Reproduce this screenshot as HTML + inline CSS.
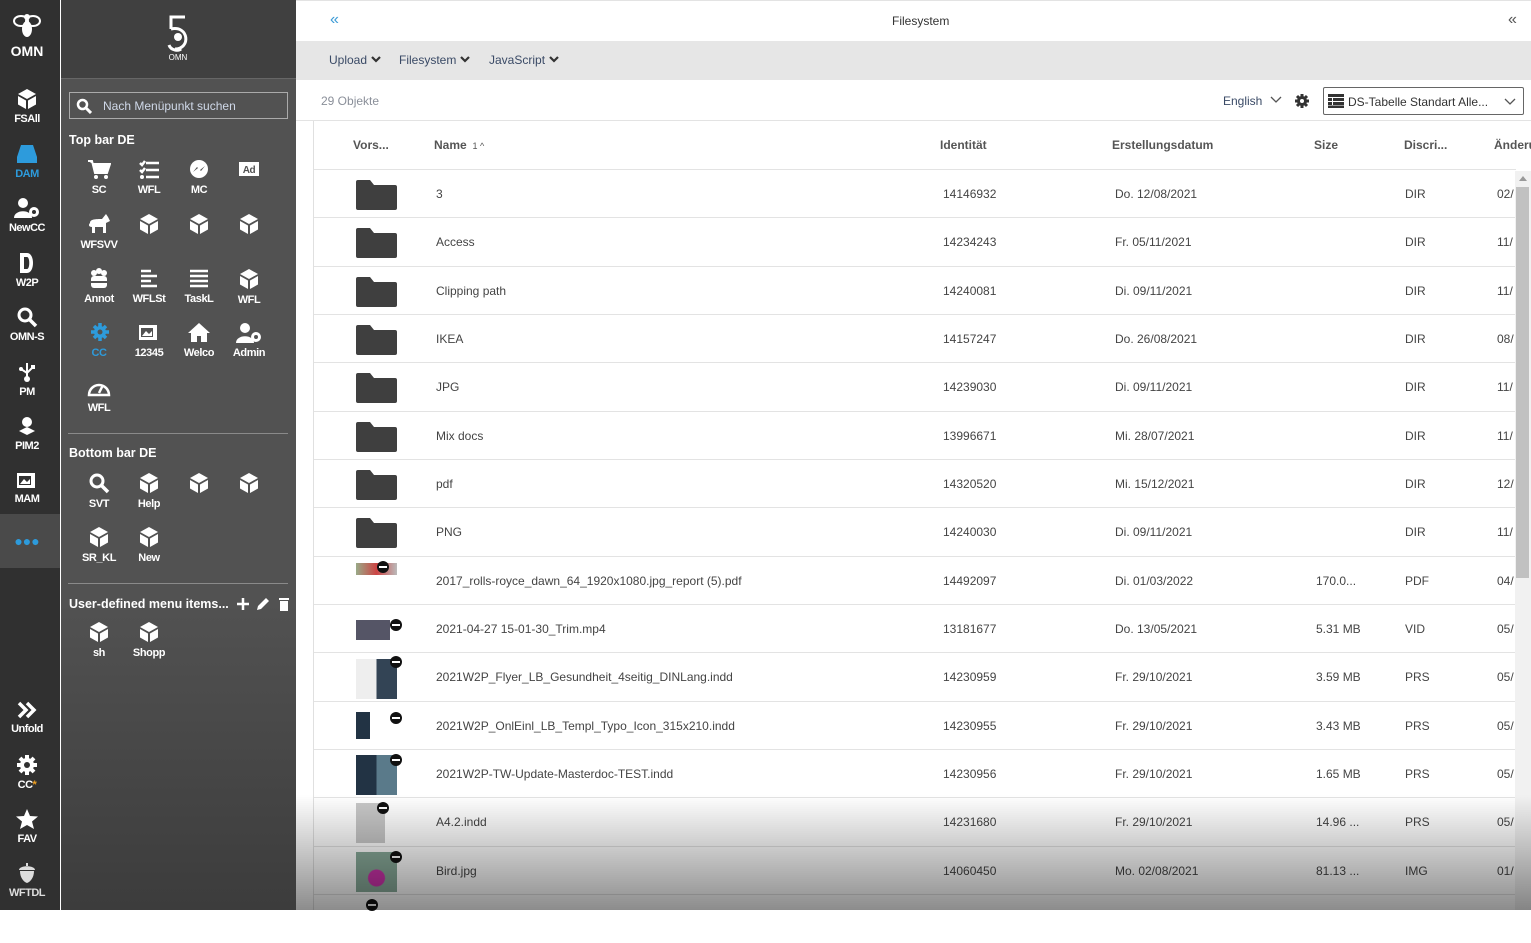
<!DOCTYPE html>
<html><head><meta charset="utf-8">
<style>
*{box-sizing:border-box;margin:0;padding:0}
body{width:1531px;height:910px;overflow:hidden;position:relative;font-family:"Liberation Sans",Arial,sans-serif;background:#fff}
.rail{position:absolute;left:0;top:0;width:60px;height:910px;background:#303030}
.rail .sel{position:absolute;left:0;top:514px;width:60px;height:54px;background:#4a4a4a}
.ri{position:absolute;left:0;width:54px;text-align:center;color:#fff;font-size:11px;font-weight:bold;letter-spacing:-0.5px}
.ri svg{display:block;margin:0 auto 3px}
.panel{position:absolute;left:61px;top:0;width:235px;height:910px;background:linear-gradient(#525252 0,#525252 600px,#3c3c3c 910px)}
.logo{position:absolute;left:0;top:0;width:235px;height:79px;background:#404040;border-bottom:1px solid #666}
.search{position:absolute;left:8px;top:92px;width:219px;height:27px;border:1px solid #aaa;color:#cfd8e8;font-size:12px;padding:6px 0 0 33px}
.h{position:absolute;left:8px;color:#fff;font-size:12.5px;font-weight:bold}
.it{position:absolute;width:50px;text-align:center;color:#fff;font-size:11px;font-weight:bold;letter-spacing:-0.4px}
.it svg{display:block;margin:0 auto 4px}
.hr{position:absolute;left:7px;width:220px;height:1px;background:#8a8a8a}
.main{position:absolute;left:296px;top:0;width:1235px;height:910px}
.top{position:absolute;left:0;top:0;width:1235px;height:41px;background:#fff;border-top:1px solid #e3e3e3}
.tool{position:absolute;left:0;top:41px;width:1235px;height:39px;background:#e6e6e6}
.tool span{position:absolute;top:12px;font-size:12px;color:#3a4a66}
.tool svg{margin-left:4px;vertical-align:1px}
.cnt{position:absolute;left:0;top:80px;width:1235px;height:41px;border-bottom:1px solid #e3e3e3;background:#fff}
.tbl{position:absolute;left:17px;top:121px;width:1218px;height:789px;border-left:1px solid #e0e0e0}
.th{position:absolute;top:17px;font-size:12px;font-weight:bold;color:#555}
.row{position:absolute;left:0;width:1202px;height:49px;border-top:1px solid #e3e3e3;font-size:12px;color:#444}
.row span{position:absolute;top:17px;white-space:nowrap}
.fold{position:absolute;left:42px;top:10px;width:41px;height:30px}
.sb{position:absolute;left:1219px;top:171px;width:16px;height:739px;background:#f1f1f1}
.sb i{position:absolute;left:1px;top:16px;width:13px;height:391px;background:#c1c1c1}
.shade{position:absolute;left:296px;top:795px;width:1235px;height:115px;background:linear-gradient(rgba(0,0,0,0),rgba(0,0,0,0.45));pointer-events:none}
.mi{position:absolute;left:42px;width:41px}
.dot{position:absolute;width:12px;height:12px;border-radius:6px;background:#111}
.dot:after{content:"";position:absolute;left:2px;top:5px;width:8px;height:2px;background:#fff}
</style></head><body>

<div class="rail">
  <div class="ri" style="top:12px"><svg width="30" height="28" viewBox="0 0 30 28"><ellipse cx="9" cy="9" rx="7" ry="5" fill="none" stroke="#fff" stroke-width="2"/><ellipse cx="21" cy="9" rx="7" ry="5" fill="none" stroke="#fff" stroke-width="2"/><ellipse cx="15" cy="17" rx="5" ry="8" fill="#fff"/><circle cx="15" cy="5" r="3" fill="#fff"/></svg><span style="font-size:14px;letter-spacing:0">OMN</span></div>
  <div class="ri" style="top:88px"><svg width="22" height="22" viewBox="0 0 22 22"><path d="M11 1 L20 6 L11 11 L2 6Z M2 8 L10 12.5 L10 21 L2 16.5Z M12 12.5 L20 8 L20 16.5 L12 21Z" fill="#fff"/></svg>FSAll</div>
  <div class="ri" style="top:143px;color:#2d9bdc"><svg width="22" height="22" viewBox="0 0 22 22"><path d="M5 2 H17 L21 14 V20 H1 V14Z" fill="#2d9bdc"/></svg>DAM</div>
  <div class="ri" style="top:197px"><svg width="28" height="22" viewBox="0 0 28 22"><circle cx="10" cy="6" r="5" fill="#fff"/><path d="M1 21 C1 12 19 12 19 21Z" fill="#fff"/><circle cx="21" cy="15" r="5" fill="#fff"/><circle cx="21" cy="15" r="2" fill="#303030"/></svg>NewCC</div>
  <div class="ri" style="top:252px"><svg width="20" height="22" viewBox="0 0 20 22"><path d="M3 1 H10 C18 1 18 21 10 21 H3Z" fill="#fff"/><path d="M7 5 H10 C13 5 13 17 10 17 H7Z" fill="#303030"/></svg>W2P</div>
  <div class="ri" style="top:306px"><svg width="22" height="22" viewBox="0 0 22 22"><circle cx="9" cy="9" r="6" fill="none" stroke="#fff" stroke-width="3"/><path d="M13 13 L20 20" stroke="#fff" stroke-width="3.5"/></svg>OMN-S</div>
  <div class="ri" style="top:361px"><svg width="22" height="22" viewBox="0 0 22 22"><path d="M11 2 V16 M5 8 L11 12 L17 6" stroke="#fff" stroke-width="2" fill="none"/><circle cx="11" cy="18" r="3" fill="#fff"/><circle cx="5" cy="8" r="2" fill="#fff"/><rect x="15" y="4" width="4" height="4" fill="#fff"/></svg>PM</div>
  <div class="ri" style="top:415px"><svg width="22" height="22" viewBox="0 0 22 22"><circle cx="11" cy="7" r="5" fill="#fff"/><path d="M3 16 L11 12 L19 16 L11 20Z" fill="#fff"/></svg>PIM2</div>
  <div class="ri" style="top:470px"><svg width="22" height="20" viewBox="0 0 22 20"><rect x="1" y="3" width="18" height="15" fill="#fff"/><rect x="3" y="6" width="12" height="9" fill="#303030"/><path d="M4 14 L8 9 L11 12 L14 9 V14Z" fill="#fff"/></svg>MAM</div>
  <div class="sel"></div>
  <div class="ri" style="top:533px;color:#2d9bdc;font-size:14px;letter-spacing:0">●●●</div>
  <div class="ri" style="top:700px"><svg width="22" height="20" viewBox="0 0 22 20"><path d="M3 3 L10 10 L3 17 M11 3 L18 10 L11 17" stroke="#fff" stroke-width="3.5" fill="none"/></svg>Unfold</div>
  <div class="ri" style="top:754px"><svg width="22" height="22" viewBox="0 0 22 22"><circle cx="11" cy="11" r="7" fill="#fff"/><g stroke="#fff" stroke-width="4"><path d="M11 1V21M1 11H21M4 4L18 18M18 4L4 18"/></g><circle cx="11" cy="11" r="3" fill="#303030"/></svg>CC<span style="color:#f0a020">*</span></div>
  <div class="ri" style="top:808px"><svg width="24" height="22" viewBox="0 0 24 22"><path d="M12 1 L15 8 L23 8.5 L17 13.5 L19 21 L12 17 L5 21 L7 13.5 L1 8.5 L9 8Z" fill="#fff"/></svg>FAV</div>
  <div class="ri" style="top:862px;color:#ddd"><svg width="22" height="22" viewBox="0 0 22 22"><path d="M3 8 C3 3 19 3 19 8Z M4 9 H18 C18 16 14 20 11 21 C8 20 4 16 4 9Z" fill="#ddd"/><rect x="10" y="1" width="2" height="3" fill="#ddd"/></svg>WFTDL</div>
</div>

<div class="panel">
  <div class="logo"><svg style="position:absolute;left:104px;top:15px" width="26" height="48" viewBox="0 0 26 48"><path d="M20 2 H6 V14 M6 14 C24 10 26 34 10 34 M4 30 C6 36 14 36 16 34" stroke="#fff" stroke-width="3" fill="none"/><circle cx="13" cy="22" r="4" fill="#fff"/><text x="13" y="45" fill="#fff" font-size="8" text-anchor="middle" font-family="Liberation Sans">OMN</text></svg></div>
  <div class="search"><svg style="position:absolute;left:6px;top:5px" width="16" height="16" viewBox="0 0 16 16"><circle cx="6.5" cy="6.5" r="4.5" fill="none" stroke="#fff" stroke-width="2.5"/><path d="M10 10 L15 15" stroke="#fff" stroke-width="3"/></svg>Nach Menüpunkt suchen</div>
  <div class="h" style="top:133px">Top bar DE</div>
  <div class="it" style="left:13px;top:159px"><svg width="24" height="21" viewBox="0 0 24 21"><path d="M1 2 H5 L8 14 H20 L23 5 H6" fill="#fff" stroke="#fff" stroke-width="2"/><circle cx="9" cy="18" r="2" fill="#fff"/><circle cx="19" cy="18" r="2" fill="#fff"/></svg>SC</div>
  <div class="it" style="left:63px;top:159px"><svg width="22" height="21" viewBox="0 0 22 21"><path d="M2 4 L4 6 L7 2 M2 11 L4 13 L7 9 M8 4H21 M8 11H21 M8 18H21" stroke="#fff" stroke-width="2.5" fill="none"/><circle cx="4" cy="18" r="2" fill="#fff"/></svg>WFL</div>
  <div class="it" style="left:113px;top:159px"><svg width="22" height="21" viewBox="0 0 22 21"><circle cx="11" cy="10" r="9" fill="#fff"/><path d="M5 13 L9 8 L12 11 L17 7 L13 12 L10 9Z" fill="#525252"/></svg>MC</div>
  <div class="it" style="left:163px;top:159px"><svg width="22" height="21" viewBox="0 0 22 21"><rect x="1" y="3" width="20" height="14" fill="#fff"/><text x="11" y="14" font-size="10" font-weight="bold" fill="#525252" text-anchor="middle" font-family="Liberation Sans">Ad</text></svg></div>
  <div class="it" style="left:13px;top:213px"><svg width="26" height="22" viewBox="0 0 26 22"><path d="M4 10 C4 6 10 6 16 6 L20 1 L22 4 L24 8 L20 10 V20 H17 V14 H9 V20 H6 V14 C3 14 2 12 4 10Z" fill="#fff"/></svg>WFSVV</div>
  <div class="it" style="left:63px;top:213px"><svg width="22" height="22" viewBox="0 0 22 22"><path d="M11 1 L20 6 L11 11 L2 6Z M2 8 L10 12.5 L10 21 L2 16.5Z M12 12.5 L20 8 L20 16.5 L12 21Z" fill="#fff"/></svg></div>
  <div class="it" style="left:113px;top:213px"><svg width="22" height="22" viewBox="0 0 22 22"><path d="M11 1 L20 6 L11 11 L2 6Z M2 8 L10 12.5 L10 21 L2 16.5Z M12 12.5 L20 8 L20 16.5 L12 21Z" fill="#fff"/></svg></div>
  <div class="it" style="left:163px;top:213px"><svg width="22" height="22" viewBox="0 0 22 22"><path d="M11 1 L20 6 L11 11 L2 6Z M2 8 L10 12.5 L10 21 L2 16.5Z M12 12.5 L20 8 L20 16.5 L12 21Z" fill="#fff"/></svg></div>
  <div class="it" style="left:13px;top:268px"><svg width="22" height="21" viewBox="0 0 22 21"><circle cx="6" cy="5" r="3" fill="#fff"/><circle cx="11" cy="3" r="3" fill="#fff"/><circle cx="16" cy="5" r="3" fill="#fff"/><rect x="3" y="8" width="16" height="12" rx="3" fill="#fff"/><rect x="3" y="13" width="16" height="2" fill="#525252"/></svg>Annot</div>
  <div class="it" style="left:63px;top:268px"><svg width="22" height="21" viewBox="0 0 22 21"><path d="M3 3H13 M3 8H19 M3 13H13 M3 18H19" stroke="#fff" stroke-width="2.5"/></svg>WFLSt</div>
  <div class="it" style="left:113px;top:268px"><svg width="22" height="21" viewBox="0 0 22 21"><path d="M2 3H20 M2 8H20 M2 13H20 M2 18H20" stroke="#fff" stroke-width="2.5"/></svg>TaskL</div>
  <div class="it" style="left:163px;top:268px"><svg width="22" height="22" viewBox="0 0 22 22"><path d="M11 1 L20 6 L11 11 L2 6Z M2 8 L10 12.5 L10 21 L2 16.5Z M12 12.5 L20 8 L20 16.5 L12 21Z" fill="#fff"/></svg>WFL</div>
  <div class="it" style="left:13px;top:322px;color:#2d9bdc"><svg width="22" height="21" viewBox="0 0 22 21"><circle cx="12" cy="10" r="6" fill="#2d9bdc"/><g stroke="#2d9bdc" stroke-width="3.5"><path d="M12 1V19M3 10H21M6 4L18 16M18 4L6 16"/></g><circle cx="12" cy="10" r="2.5" fill="#525252"/></svg>CC</div>
  <div class="it" style="left:63px;top:322px"><svg width="22" height="21" viewBox="0 0 22 21"><rect x="1" y="3" width="18" height="15" fill="#fff"/><rect x="3" y="6" width="12" height="9" fill="#525252"/><path d="M4 14 L8 9 L11 12 L14 9 V14Z" fill="#fff"/></svg>12345</div>
  <div class="it" style="left:113px;top:322px"><svg width="24" height="21" viewBox="0 0 24 21"><path d="M12 1 L23 11 H20 V20 H4 V11 H1Z" fill="#fff"/><rect x="10" y="14" width="4" height="6" fill="#525252"/></svg>Welco</div>
  <div class="it" style="left:163px;top:322px"><svg width="28" height="21" viewBox="0 0 28 21"><circle cx="10" cy="6" r="5" fill="#fff"/><path d="M1 21 C1 12 19 12 19 21Z" fill="#fff"/><circle cx="21" cy="15" r="5" fill="#fff"/><circle cx="21" cy="15" r="2" fill="#525252"/></svg>Admin</div>
  <div class="it" style="left:13px;top:377px"><svg width="24" height="21" viewBox="0 0 24 21"><path d="M2 18 A10 10 0 1 1 22 18Z" fill="none" stroke="#fff" stroke-width="2.5"/><path d="M12 16 L16 8" stroke="#fff" stroke-width="2.5"/></svg>WFL</div>
  <div class="hr" style="top:433px"></div>
  <div class="h" style="top:446px">Bottom bar DE</div>
  <div class="it" style="left:13px;top:472px"><svg width="22" height="22" viewBox="0 0 22 22"><circle cx="9" cy="9" r="6" fill="none" stroke="#fff" stroke-width="3"/><path d="M13 13 L20 20" stroke="#fff" stroke-width="3.5"/></svg>SVT</div>
  <div class="it" style="left:63px;top:472px"><svg width="22" height="22" viewBox="0 0 22 22"><path d="M11 1 L20 6 L11 11 L2 6Z M2 8 L10 12.5 L10 21 L2 16.5Z M12 12.5 L20 8 L20 16.5 L12 21Z" fill="#fff"/></svg>Help</div>
  <div class="it" style="left:113px;top:472px"><svg width="22" height="22" viewBox="0 0 22 22"><path d="M11 1 L20 6 L11 11 L2 6Z M2 8 L10 12.5 L10 21 L2 16.5Z M12 12.5 L20 8 L20 16.5 L12 21Z" fill="#fff"/></svg></div>
  <div class="it" style="left:163px;top:472px"><svg width="22" height="22" viewBox="0 0 22 22"><path d="M11 1 L20 6 L11 11 L2 6Z M2 8 L10 12.5 L10 21 L2 16.5Z M12 12.5 L20 8 L20 16.5 L12 21Z" fill="#fff"/></svg></div>
  <div class="it" style="left:13px;top:526px"><svg width="22" height="22" viewBox="0 0 22 22"><path d="M11 1 L20 6 L11 11 L2 6Z M2 8 L10 12.5 L10 21 L2 16.5Z M12 12.5 L20 8 L20 16.5 L12 21Z" fill="#fff"/></svg>SR_KL</div>
  <div class="it" style="left:63px;top:526px"><svg width="22" height="22" viewBox="0 0 22 22"><path d="M11 1 L20 6 L11 11 L2 6Z M2 8 L10 12.5 L10 21 L2 16.5Z M12 12.5 L20 8 L20 16.5 L12 21Z" fill="#fff"/></svg>New</div>
  <div class="hr" style="top:583px"></div>
  <div class="h" style="top:597px">User-defined menu items...</div>
  <svg style="position:absolute;left:175px;top:597px" width="55" height="14" viewBox="0 0 55 14"><path d="M7 1V13M1 7H13" stroke="#fff" stroke-width="2.5"/><path d="M21 13 L22 9 L30 1 L33 4 L25 12Z" fill="#fff"/><rect x="43" y="1" width="10" height="2" fill="#fff"/><rect x="44" y="4" width="8" height="10" fill="#fff"/></svg>
  <div class="it" style="left:13px;top:621px"><svg width="22" height="22" viewBox="0 0 22 22"><path d="M11 1 L20 6 L11 11 L2 6Z M2 8 L10 12.5 L10 21 L2 16.5Z M12 12.5 L20 8 L20 16.5 L12 21Z" fill="#fff"/></svg>sh</div>
  <div class="it" style="left:63px;top:621px"><svg width="22" height="22" viewBox="0 0 22 22"><path d="M11 1 L20 6 L11 11 L2 6Z M2 8 L10 12.5 L10 21 L2 16.5Z M12 12.5 L20 8 L20 16.5 L12 21Z" fill="#fff"/></svg>Shopp</div>
</div>

<div class="main">
  <div class="top">
    <span style="position:absolute;left:34px;top:10px;color:#3d9bd6;font-size:16px">«</span>
    <span style="position:absolute;left:596px;top:13px;color:#333;font-size:12px">Filesystem</span>
    <span style="position:absolute;left:1212px;top:10px;color:#555;font-size:16px">«</span>
  </div>
  <div class="tool">
    <span style="left:33px">Upload<svg width="10" height="7" viewBox="0 0 10 7"><path d="M1 1 L5 5 L9 1" stroke="#333" stroke-width="2.2" fill="none"/></svg></span>
    <span style="left:103px">Filesystem<svg width="10" height="7" viewBox="0 0 10 7"><path d="M1 1 L5 5 L9 1" stroke="#333" stroke-width="2.2" fill="none"/></svg></span>
    <span style="left:193px">JavaScript<svg width="10" height="7" viewBox="0 0 10 7"><path d="M1 1 L5 5 L9 1" stroke="#333" stroke-width="2.2" fill="none"/></svg></span>
  </div>
  <div class="cnt">
    <span style="position:absolute;left:25px;top:14px;font-size:12px;color:#8a8f99">29 Objekte</span>
    <span style="position:absolute;left:927px;top:14px;font-size:12px;color:#3a4a66">English</span>
    <svg style="position:absolute;left:974px;top:16px" width="12" height="8" viewBox="0 0 12 8"><path d="M1 1 L6 6 L11 1" stroke="#555" stroke-width="1.3" fill="none"/></svg>
    <svg style="position:absolute;left:998px;top:13px" width="16" height="16" viewBox="0 0 16 16"><circle cx="8" cy="8" r="5" fill="#333"/><g stroke="#333" stroke-width="3"><path d="M8 1V15M1 8H15M3 3L13 13M13 3L3 13"/></g><circle cx="8" cy="8" r="2" fill="#fff"/></svg>
    <div style="position:absolute;left:1027px;top:7px;width:201px;height:28px;border:1px solid #666;border-radius:2px;font-size:12px;color:#333">
      <svg style="position:absolute;left:4px;top:6px" width="16" height="14" viewBox="0 0 16 14"><rect x="0" y="0" width="16" height="3" fill="#333"/><rect x="0" y="4" width="4" height="3" fill="#333"/><rect x="5" y="4" width="11" height="3" fill="#333"/><rect x="0" y="8" width="4" height="3" fill="#333"/><rect x="5" y="8" width="11" height="3" fill="#333"/><rect x="0" y="11.5" width="16" height="2.5" fill="#333"/></svg>
      <span style="position:absolute;left:24px;top:7px">DS-Tabelle Standart Alle...</span>
      <svg style="position:absolute;left:180px;top:10px" width="12" height="8" viewBox="0 0 12 8"><path d="M1 1 L6 6 L11 1" stroke="#555" stroke-width="1.3" fill="none"/></svg>
    </div>
  </div>
  <div class="tbl">
    <span class="th" style="left:39px">Vors...</span>
    <span class="th" style="left:120px">Name <span style="font-weight:normal;font-size:9px">&nbsp;1 ^</span></span>
    <span class="th" style="left:626px">Identität</span>
    <span class="th" style="left:798px">Erstellungsdatum</span>
    <span class="th" style="left:1000px">Size</span>
    <span class="th" style="left:1090px">Discri...</span>
    <span class="th" style="left:1180px">Änderu</span>

    <div class="row" style="top:48px"><svg class="fold" viewBox="0 0 41 30"><path d="M2 0 H14 L18 5 H39 Q41 5 41 7 V28 Q41 30 39 30 H2 Q0 30 0 28 V2 Q0 0 2 0Z" fill="#3f3f3f"/></svg><span style="left:122px">3</span><span style="left:629px">14146932</span><span style="left:801px">Do. 12/08/2021</span><span style="left:1091px">DIR</span><span style="left:1183px">02/</span></div>
    <div class="row" style="top:96px"><svg class="fold" viewBox="0 0 41 30"><path d="M2 0 H14 L18 5 H39 Q41 5 41 7 V28 Q41 30 39 30 H2 Q0 30 0 28 V2 Q0 0 2 0Z" fill="#3f3f3f"/></svg><span style="left:122px">Access</span><span style="left:629px">14234243</span><span style="left:801px">Fr. 05/11/2021</span><span style="left:1091px">DIR</span><span style="left:1183px">11/</span></div>
    <div class="row" style="top:145px"><svg class="fold" viewBox="0 0 41 30"><path d="M2 0 H14 L18 5 H39 Q41 5 41 7 V28 Q41 30 39 30 H2 Q0 30 0 28 V2 Q0 0 2 0Z" fill="#3f3f3f"/></svg><span style="left:122px">Clipping path</span><span style="left:629px">14240081</span><span style="left:801px">Di. 09/11/2021</span><span style="left:1091px">DIR</span><span style="left:1183px">11/</span></div>
    <div class="row" style="top:193px"><svg class="fold" viewBox="0 0 41 30"><path d="M2 0 H14 L18 5 H39 Q41 5 41 7 V28 Q41 30 39 30 H2 Q0 30 0 28 V2 Q0 0 2 0Z" fill="#3f3f3f"/></svg><span style="left:122px">IKEA</span><span style="left:629px">14157247</span><span style="left:801px">Do. 26/08/2021</span><span style="left:1091px">DIR</span><span style="left:1183px">08/</span></div>
    <div class="row" style="top:241px"><svg class="fold" viewBox="0 0 41 30"><path d="M2 0 H14 L18 5 H39 Q41 5 41 7 V28 Q41 30 39 30 H2 Q0 30 0 28 V2 Q0 0 2 0Z" fill="#3f3f3f"/></svg><span style="left:122px">JPG</span><span style="left:629px">14239030</span><span style="left:801px">Di. 09/11/2021</span><span style="left:1091px">DIR</span><span style="left:1183px">11/</span></div>
    <div class="row" style="top:290px"><svg class="fold" viewBox="0 0 41 30"><path d="M2 0 H14 L18 5 H39 Q41 5 41 7 V28 Q41 30 39 30 H2 Q0 30 0 28 V2 Q0 0 2 0Z" fill="#3f3f3f"/></svg><span style="left:122px">Mix docs</span><span style="left:629px">13996671</span><span style="left:801px">Mi. 28/07/2021</span><span style="left:1091px">DIR</span><span style="left:1183px">11/</span></div>
    <div class="row" style="top:338px"><svg class="fold" viewBox="0 0 41 30"><path d="M2 0 H14 L18 5 H39 Q41 5 41 7 V28 Q41 30 39 30 H2 Q0 30 0 28 V2 Q0 0 2 0Z" fill="#3f3f3f"/></svg><span style="left:122px">pdf</span><span style="left:629px">14320520</span><span style="left:801px">Mi. 15/12/2021</span><span style="left:1091px">DIR</span><span style="left:1183px">12/</span></div>
    <div class="row" style="top:386px"><svg class="fold" viewBox="0 0 41 30"><path d="M2 0 H14 L18 5 H39 Q41 5 41 7 V28 Q41 30 39 30 H2 Q0 30 0 28 V2 Q0 0 2 0Z" fill="#3f3f3f"/></svg><span style="left:122px">PNG</span><span style="left:629px">14240030</span><span style="left:801px">Di. 09/11/2021</span><span style="left:1091px">DIR</span><span style="left:1183px">11/</span></div>
    <div class="row" style="top:435px"><div class="mi" style="top:6px;height:12px;background:linear-gradient(90deg,#9a8,#c44 50%,#bbb)"></div><div class="dot" style="left:63px;top:4px"></div><span style="left:122px">2017_rolls-royce_dawn_64_1920x1080.jpg_report (5).pdf</span><span style="left:629px">14492097</span><span style="left:801px">Di. 01/03/2022</span><span style="left:1002px">170.0...</span><span style="left:1091px">PDF</span><span style="left:1183px">04/</span></div>
    <div class="row" style="top:483px"><div class="mi" style="top:15px;height:20px;background:#556;width:34px"></div><div class="dot" style="left:76px;top:14px"></div><span style="left:122px">2021-04-27 15-01-30_Trim.mp4</span><span style="left:629px">13181677</span><span style="left:801px">Do. 13/05/2021</span><span style="left:1002px">5.31 MB</span><span style="left:1091px">VID</span><span style="left:1183px">05/</span></div>
    <div class="row" style="top:531px"><div class="mi" style="top:6px;height:40px;background:linear-gradient(90deg,#eee 50%,#345 50%)"></div><div class="dot" style="left:76px;top:3px"></div><span style="left:122px">2021W2P_Flyer_LB_Gesundheit_4seitig_DINLang.indd</span><span style="left:629px">14230959</span><span style="left:801px">Fr. 29/10/2021</span><span style="left:1002px">3.59 MB</span><span style="left:1091px">PRS</span><span style="left:1183px">05/</span></div>
    <div class="row" style="top:580px"><div class="mi" style="top:10px;height:27px;width:14px;background:#234"></div><div class="dot" style="left:76px;top:10px"></div><span style="left:122px">2021W2P_OnlEinl_LB_Templ_Typo_Icon_315x210.indd</span><span style="left:629px">14230955</span><span style="left:801px">Fr. 29/10/2021</span><span style="left:1002px">3.43 MB</span><span style="left:1091px">PRS</span><span style="left:1183px">05/</span></div>
    <div class="row" style="top:628px"><div class="mi" style="top:5px;height:40px;background:linear-gradient(90deg,#234 50%,#5a7a8a 50%)"></div><div class="dot" style="left:76px;top:4px"></div><span style="left:122px">2021W2P-TW-Update-Masterdoc-TEST.indd</span><span style="left:629px">14230956</span><span style="left:801px">Fr. 29/10/2021</span><span style="left:1002px">1.65 MB</span><span style="left:1091px">PRS</span><span style="left:1183px">05/</span></div>
    <div class="row" style="top:676px"><div class="mi" style="top:5px;height:40px;width:29px;background:#c8c8c8"></div><div class="dot" style="left:63px;top:4px"></div><span style="left:122px">A4.2.indd</span><span style="left:629px">14231680</span><span style="left:801px">Fr. 29/10/2021</span><span style="left:1002px">14.96 ...</span><span style="left:1091px">PRS</span><span style="left:1183px">05/</span></div>
    <div class="row" style="top:725px"><div class="mi" style="top:5px;height:40px;background:radial-gradient(circle at 50% 65%,#c3a 0,#c3a 8px,#8a9 9px)"></div><div class="dot" style="left:76px;top:4px"></div><span style="left:122px">Bird.jpg</span><span style="left:629px">14060450</span><span style="left:801px">Mo. 02/08/2021</span><span style="left:1002px">81.13 ...</span><span style="left:1091px">IMG</span><span style="left:1183px">01/</span></div>
    <div class="row" style="top:773px"><div class="dot" style="left:52px;top:4px"></div></div>
  </div>
  <div class="sb"><svg style="position:absolute;left:4px;top:5px" width="8" height="5" viewBox="0 0 8 5"><path d="M0 5 L4 0 L8 5Z" fill="#999"/></svg><i></i></div>
</div>
<div class="shade"></div>
</body></html>
